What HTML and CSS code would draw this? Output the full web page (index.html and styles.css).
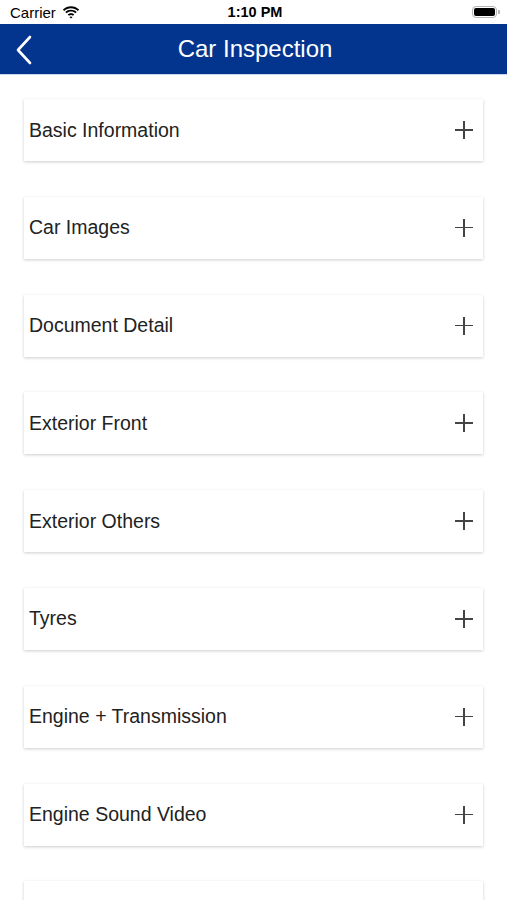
FILE: index.html
```html
<!DOCTYPE html>
<html lang="en">
<head>
    <meta charset="UTF-8">
    <meta name="viewport" content="width=device-width, initial-scale=1.0">
    <title>Car Inspection</title>
    <link rel="stylesheet" href="styles.css">
</head>
<body>
    <div class="status-bar">
        <div class="status-left">
            <span>Carrier</span>
            <svg class="wifi" width="18" height="13" viewBox="0 0 18 13">
                <path d="M9 2.2c2.6 0 5 1 6.8 2.7l1.3-1.3C14.9 1.5 12.1.3 9 .3S3.1 1.5.9 3.6l1.3 1.3C4 3.2 6.4 2.2 9 2.2z" fill="#000"/>
                <path d="M9 5.6c1.7 0 3.2.6 4.4 1.7l1.3-1.3C13.2 4.6 11.2 3.8 9 3.8S4.8 4.6 3.3 6l1.3 1.3C5.8 6.2 7.3 5.6 9 5.6z" fill="#000"/>
                <path d="M9 9c.8 0 1.5.3 2 .8L12.3 8.5C11.4 7.7 10.3 7.2 9 7.2s-2.4.5-3.3 1.3L7 9.8c.5-.5 1.2-.8 2-.8z" fill="#000"/>
                <path d="M9 12.6l1.6-1.6c-.4-.4-1-.6-1.6-.6s-1.2.2-1.6.6z" fill="#000"/>
            </svg>
        </div>
        <div class="status-time">1:10 PM</div>
        <div class="status-right">
            <div class="battery"><div class="battery-level"></div></div>
            <div class="battery-tip"></div>
        </div>
    </div>

    <div class="nav-bar">
        <svg class="back" width="17" height="30" viewBox="0 0 17 30">
            <path d="M15 2L3 15l12 13" fill="none" stroke="#fff" stroke-width="2.6" stroke-linecap="round" stroke-linejoin="round"/>
        </svg>
        <h1 class="nav-title">Car Inspection</h1>
    </div>

    <div class="sections">
        <div class="section-card"><span>Basic Information</span><span class="plus"></span></div>
        <div class="section-card"><span>Car Images</span><span class="plus"></span></div>
        <div class="section-card"><span>Document Detail</span><span class="plus"></span></div>
        <div class="section-card"><span>Exterior Front</span><span class="plus"></span></div>
        <div class="section-card"><span>Exterior Others</span><span class="plus"></span></div>
        <div class="section-card"><span>Tyres</span><span class="plus"></span></div>
        <div class="section-card"><span>Engine + Transmission</span><span class="plus"></span></div>
        <div class="section-card"><span>Engine Sound Video</span><span class="plus"></span></div>
        <div class="section-card"></div>
    </div>
</body>
</html>
```

FILE: styles.css
```css
body {
    margin: 0;
    background-color: #fff;
    font-family: "Liberation Sans", Arial, sans-serif;
    overflow: hidden;
    height: 900px;
}

.status-bar {
    height: 24px;
    display: flex;
    align-items: center;
    justify-content: space-between;
    padding: 0 7px 0 10px;
    font-size: 15px;
    color: #000;
}
.status-left {
    display: flex;
    align-items: center;
    gap: 6px;
    width: 120px;
}
.status-time {
    font-weight: bold;
    font-size: 14.5px;
}
.status-right {
    width: 120px;
    display: flex;
    justify-content: flex-end;
    align-items: center;
}
.battery {
    width: 25px;
    height: 12px;
    border: 1px solid #b5b5b5;
    border-radius: 4px;
    padding: 1px;
    box-sizing: border-box;
}
.battery-level {
    width: 100%;
    height: 100%;
    background-color: #000;
    border-radius: 2px;
}
.battery-tip {
    width: 2px;
    height: 4px;
    background-color: #b5b5b5;
    border-radius: 0 1px 1px 0;
    margin-left: 1px;
}

.nav-bar {
    height: 50px;
    background-color: #03358f;
    border-bottom: 1px solid #c9d6ee;
    display: flex;
    align-items: center;
    position: relative;
}
.back {
    position: absolute;
    left: 15px;
    top: 11px;
}
.nav-title {
    margin: 0;
    width: 100%;
    text-align: center;
    color: #fff;
    font-size: 24px;
    font-weight: normal;
    padding-left: 3px;
}

.sections {
    padding: 24px 24px 0 24px;
    display: flex;
    flex-direction: column;
    gap: 35.8px;
}
.section-card {
    height: 62px;
    box-sizing: border-box;
    background-color: #fff;
    box-shadow: 0 1px 3px rgba(0, 0, 0, 0.2);
    display: flex;
    align-items: center;
    justify-content: space-between;
    padding: 0 10px 0 5px;
    font-size: 19.5px;
    color: #222;
    flex-shrink: 0;
}
.plus {
    width: 18px;
    height: 18px;
    position: relative;
}
.plus::before, .plus::after {
    content: "";
    position: absolute;
    background-color: #444;
}
.plus::before {
    left: 0;
    top: 8px;
    width: 18px;
    height: 1.6px;
}
.plus::after {
    left: 8.2px;
    top: 0;
    width: 1.6px;
    height: 18px;
}
```
